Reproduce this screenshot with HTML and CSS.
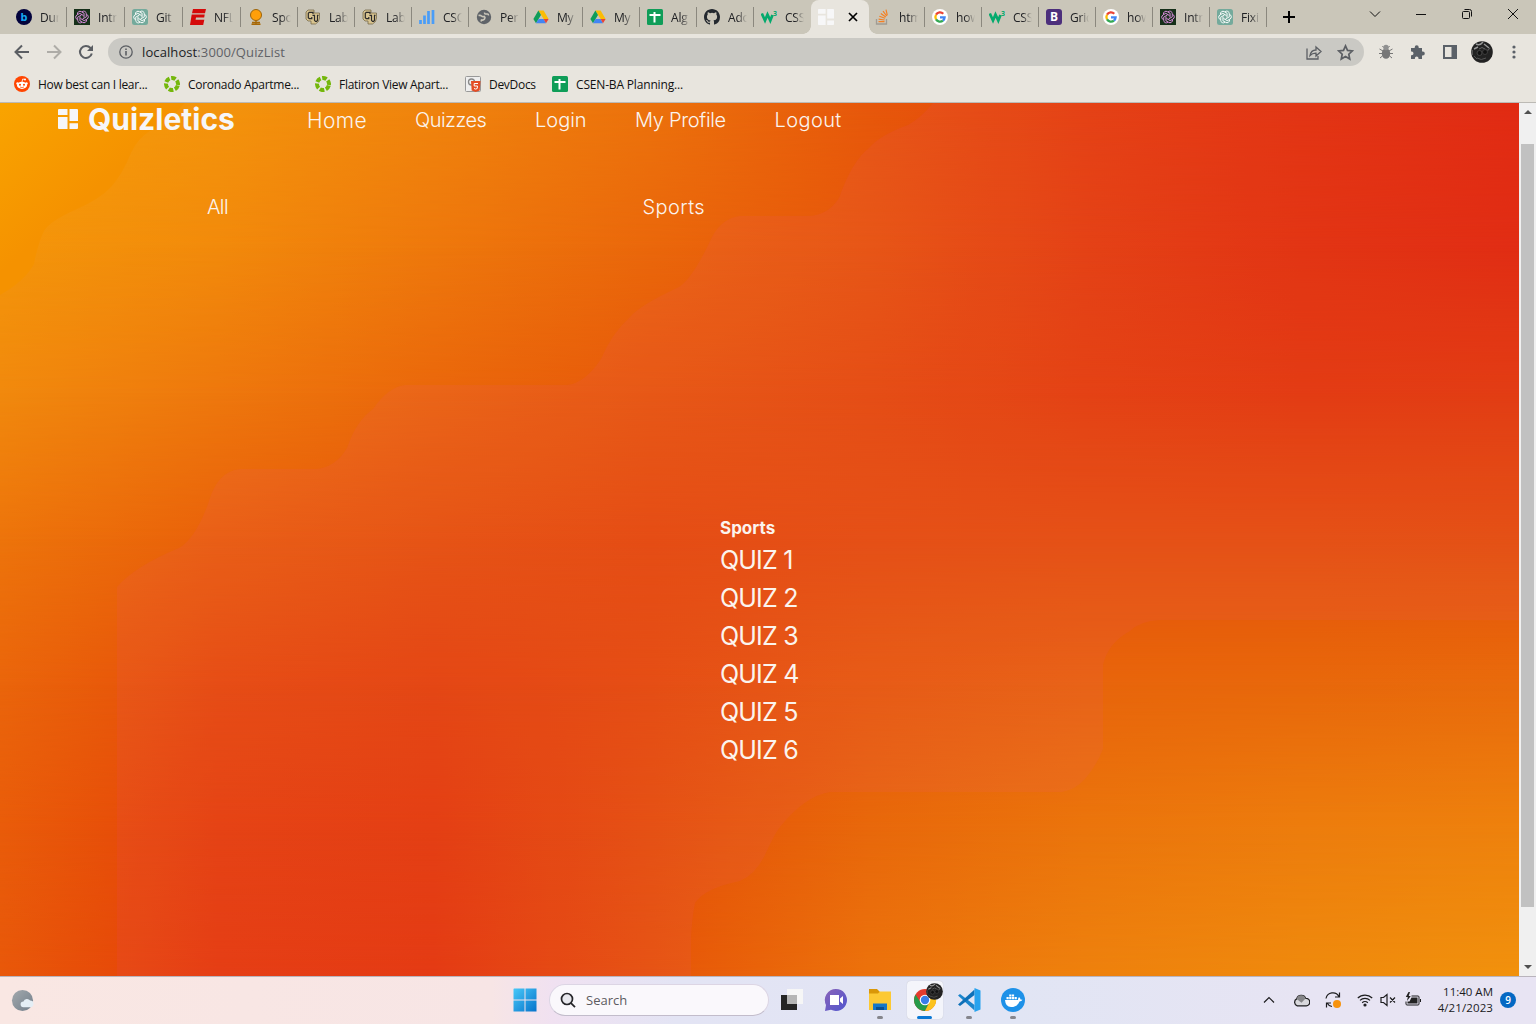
FILE: index.html
```html
<!DOCTYPE html>
<html lang="en">
<head>
<meta charset="utf-8">
<title>Quizletics</title>
<link rel="stylesheet" href="styles.css">
</head>
<body>
<svg class="defs" aria-hidden="true">
  <symbol id="knot" viewBox="0 0 16 16"><g fill="none" stroke="currentColor" stroke-width="1"><path d="M8 2.1a2.9 2.9 0 0 1 4.9 2.3v3.5L8.6 10.3"/><path d="M8 2.1a2.9 2.9 0 0 1 4.9 2.3v3.5L8.6 10.3" transform="rotate(60 8 8)"/><path d="M8 2.1a2.9 2.9 0 0 1 4.9 2.3v3.5L8.6 10.3" transform="rotate(120 8 8)"/><path d="M8 2.1a2.9 2.9 0 0 1 4.9 2.3v3.5L8.6 10.3" transform="rotate(180 8 8)"/><path d="M8 2.1a2.9 2.9 0 0 1 4.9 2.3v3.5L8.6 10.3" transform="rotate(240 8 8)"/><path d="M8 2.1a2.9 2.9 0 0 1 4.9 2.3v3.5L8.6 10.3" transform="rotate(300 8 8)"/></g></symbol>
  <symbol id="gpt-dark" viewBox="0 0 16 16"><path fill="#16301a" d="M0 0h16v16H0z"/><use href="#knot" x="1" y="1" width="14" height="14" color="#e08fe4"/></symbol>
  <symbol id="gpt-green" viewBox="0 0 16 16"><rect width="16" height="16" rx="2.5" fill="#74aa9c"/><use href="#knot" x="1" y="1" width="14" height="14" color="#fff"/></symbol>
  <symbol id="cu" viewBox="0 0 16 16"><path d="M3 1h6v3h5.500v5l-1 3.500-3 2.500H6V12H3L1 10V3z" fill="#d8c490" stroke="#6d6040" stroke-width=".7"/><path d="M8 5V3.300H4.300L3.300 4.300v4.400L4.300 9.700h2.500V8M7.500 6.300h2v5l1 1h1.200l.8-1V6.300h1" fill="none" stroke="#2b2a2a" stroke-width="1.200"/></symbol>
  <symbol id="drive" viewBox="0 0 16 16"><path fill="#fbbc04" d="M5.400 1.500h5.200L15.600 10h-5z"/><path fill="#0f9d58" d="M5.400 1.500 8 5.900 3 14.300.4 10z"/><path fill="#4285f4" d="M5.600 10h5L13 14.300H3z"/><path fill="#ea4335" d="M10.600 10h5L13 14.300z"/></symbol>
  <symbol id="sheet" viewBox="0 0 16 16"><rect width="16" height="16" rx="1.500" fill="#0f9d58"/><path d="M2.500 6h11M7.500 3V13.500" stroke="#fff" stroke-width="2"/></symbol>
  <symbol id="w3" viewBox="0 0 16 16"><path d="M.8 4.500 4 11.500 6.500 5.500 9.300 11.500 11.500 6" fill="none" stroke="#04aa6d" stroke-width="2.700"/><text x="12" y="7" font-size="7" font-weight="700" fill="#04aa6d">3</text></symbol>
  <symbol id="google" viewBox="0 0 16 16"><circle cx="8" cy="8" r="8" fill="#fff"/><g fill="none" stroke-width="2.300"><path stroke="#ea4335" d="M4.020 5.700A4.600 4.600 0 0 1 11.250 4.750"/><path stroke="#fbbc05" d="M4.020 10.300a4.600 4.600 0 0 1 0-4.600"/><path stroke="#34a853" d="M10.960 11.520a4.600 4.600 0 0 1-6.940-1.220"/><path stroke="#4285f4" d="M8 8.300h4.600a4.600 4.600 0 0 1-1.640 3.220"/></g></symbol>
  <symbol id="leaf-ring" viewBox="0 0 16 16"><circle cx="8" cy="8" r="6" fill="none" stroke="#74b70b" stroke-width="4" stroke-dasharray="4.700 1.583" transform="rotate(15 8 8)"/></symbol>
  <symbol id="tiles" viewBox="0 0 20 20"><path fill="currentColor" d="M1 0h8.500v6H0V1q0-1 1-1zM0 8h9.500v12H1q-1 0-1-1zM11.500 0H19q1 0 1 1v11h-8.500zM11.500 14.300H20V19q0 1-1 1h-7.500z"/></symbol>
  <symbol id="face" viewBox="0 0 22 22"><circle cx="11" cy="11" r="10.800" fill="#222"/><path d="M5 3q4 2 7-2M13 3l5 4M3 8l4-2" stroke="#999" fill="none" stroke-width="1.400"/><path d="M8 8q3-3 6 0t5-1" stroke="#666" fill="none"/><circle cx="8.500" cy="12" r="2.500" fill="#111" stroke="#444"/><circle cx="14" cy="11" r="2.500" fill="#111" stroke="#3c3c3c"/><path d="M1.500 9v5M6 17q4 3 9 0M3 15l3 3" stroke="#555" fill="none"/></symbol>
</svg>

<header class="chrome">
  <div class="tabstrip">
    <div class="tabs">
      <div class="tab"><svg class="ico" viewBox="0 0 16 16"><circle cx="8" cy="8" r="8" fill="#02023c"/><text x="4.600" y="12" font-size="11" font-weight="700" fill="#14a8f4">b</text></svg><span>Dur</span></div>
      <div class="tab"><svg class="ico"><use href="#gpt-dark"/></svg><span>Intr</span></div>
      <div class="tab"><svg class="ico"><use href="#gpt-green"/></svg><span>Git</span></div>
      <div class="tab"><svg class="ico" viewBox="0 0 16 16"><path fill="#d50a0a" d="M3 0h13l-1 4.300H2zM1.700 5.600h13l-.5 2.800H6l-.4 2.300h8.700L13.200 16H0z"/></svg><span>NFL</span></div>
      <div class="tab"><svg class="ico" viewBox="0 0 16 16"><circle cx="8" cy="6" r="5.500" fill="#ff9f0a" stroke="#9b640c"/><path d="M4 13.500h8M8 11v4M3.500 15.300h9" stroke="#a76806" stroke-width="1.400"/></svg><span>Spo</span></div>
      <div class="tab"><svg class="ico"><use href="#cu"/></svg><span>Lab</span></div>
      <div class="tab"><svg class="ico"><use href="#cu"/></svg><span>Lab</span></div>
      <div class="tab"><svg class="ico" viewBox="0 0 16 16"><path d="M1.500 11v4M5.500 6.500V15M9.500 2v13M14 1v14" stroke="#4a9df8" stroke-width="2.700"/></svg><span>CSC</span></div>
      <div class="tab"><svg class="ico" viewBox="0 0 16 16"><circle cx="8" cy="8" r="7.200" fill="#5f6368"/><path d="M2.500 6.500q2-.5 3 .5t3 .5q1 1 0 2.500t-3 1l-.5 1.500" fill="none" stroke="#cac6b9" stroke-width="1.600"/><path d="M8.500 3.500q0 2 2 1.500t2 1.500" fill="none" stroke="#cac6b9" stroke-width="1.500"/></svg><span>Per</span></div>
      <div class="tab"><svg class="ico"><use href="#drive"/></svg><span>My</span></div>
      <div class="tab"><svg class="ico"><use href="#drive"/></svg><span>My</span></div>
      <div class="tab"><svg class="ico"><use href="#sheet"/></svg><span>Alg</span></div>
      <div class="tab"><svg class="ico" viewBox="0 0 16 16"><path fill="#24292f" d="M8 0C3.580 0 0 3.580 0 8c0 3.540 2.290 6.530 5.470 7.590.4.070.55-.17.55-.38v-1.490c-2.010.37-2.530-.49-2.690-.94-.09-.23-.48-.94-.82-1.130-.28-.15-.68-.52-.01-.53.63-.01 1.080.58 1.230.82.72 1.210 1.870.87 2.330.66.07-.52.28-.87.51-1.070-1.780-.2-3.640-.89-3.640-3.950 0-.87.31-1.590.82-2.150-.08-.2-.36-1.020.08-2.120 0 0 .67-.21 2.200.82a7.600 7.600 0 0 1 4 0c1.530-1.040 2.200-.82 2.200-.82.44 1.100.16 1.920.08 2.120.51.56.82 1.270.82 2.150 0 3.070-1.870 3.750-3.650 3.950.29.25.54.73.54 1.480v2.200c0 .21.15.46.55.38A8 8 0 0 0 16 8c0-4.420-3.580-8-8-8z"/></svg><span>Ado</span></div>
      <div class="tab no-sep"><svg class="ico"><use href="#w3"/></svg><span>CSS</span></div>
      <div class="tab active"><svg class="ico"><use href="#tiles"/></svg><svg class="close" viewBox="0 0 10 10"><path d="M1 1l8 8M9 1 1 9" stroke="#000" stroke-width="1.700"/></svg></div>
      <div class="tab"><svg class="ico" viewBox="0 0 16 16"><path d="M1.500 10v5h10v-5" fill="none" stroke="#a09c94" stroke-width="1.300"/><path d="M3.500 12.700h6M3.600 10.200l6 .8M4.300 7.300l5.800 1.900M5.800 4.500l5 3.500M8 2.200l3.700 4.800M11 .6l1.300 5.800" stroke="#f48024" stroke-width="1.200"/></svg><span>htm</span></div>
      <div class="tab"><svg class="ico"><use href="#google"/></svg><span>how</span></div>
      <div class="tab"><svg class="ico"><use href="#w3"/></svg><span>CSS</span></div>
      <div class="tab"><svg class="ico" viewBox="0 0 16 16"><rect width="16" height="16" rx="3" fill="#4c2f7c"/><text x="3.900" y="12.300" font-size="12" font-weight="700" fill="#fff">B</text></svg><span>Grid</span></div>
      <div class="tab"><svg class="ico"><use href="#google"/></svg><span>how</span></div>
      <div class="tab"><svg class="ico"><use href="#gpt-dark"/></svg><span>Intr</span></div>
      <div class="tab"><svg class="ico"><use href="#gpt-green"/></svg><span>Fixi</span></div>
    </div>
    <svg class="plus" viewBox="0 0 12 12"><path d="M6 0v12M0 6h12" stroke="#000" stroke-width="2"/></svg>
    <div class="winctl">
      <svg viewBox="0 0 12 12"><path d="M1 3.500l5 5 5-5"/></svg>
      <svg viewBox="0 0 12 12"><path d="M1 6.500h10"/></svg>
      <svg viewBox="0 0 12 12"><rect x="1.500" y="3.500" width="7" height="7" rx="1"/><path d="M3.500 1.500H8.500Q10.500 1.500 10.500 3.500V8.500"/></svg>
      <svg viewBox="0 0 12 12"><path d="M1 1l10 10M11 1 1 11"/></svg>
    </div>
  </div>

  <div class="toolbar">
    <div class="navbtns">
      <svg viewBox="0 0 16 16"><path d="M15 8H2M8 1.500 1.500 8 8 14.500" stroke="#5b5e63"/></svg>
      <svg viewBox="0 0 16 16"><path d="M1 8h13M8 1.500 14.500 8 8 14.500" stroke="#aeaca7"/></svg>
      <svg viewBox="0 0 16 16"><path d="M13.800 9.500A6 6 0 1 1 12.500 4L14 5.500" stroke="#5b5e63"/><path d="M15 1v6H9z" fill="#5b5e63"/></svg>
    </div>
    <div class="omnibox">
      <svg class="info" viewBox="0 0 14 14"><circle cx="7" cy="7" r="6.200"/><path d="M7 6v4.500M7 3.500v1.500" stroke-width="1.600"/></svg>
      <span class="url">localhost<i>:3000/QuizList</i></span>
      <svg class="share" viewBox="0 0 16 16"><path d="M1 4.500v10.500h11V12M4 11.500Q5 6 10 6V3l5 4.500L10 12V9.200Q6.500 9 4 11.500z"/></svg>
      <svg class="star" viewBox="0 0 16 16"><path d="M8 1.800l1.900 4.200 4.600.5-3.400 3.100.9 4.500L8 11.800l-4 2.300.9-4.500L1.500 6.500 6.100 6z"/></svg>
    </div>
    <div class="exts">
      <svg viewBox="0 0 16 16"><path d="M1.500 5l3.500 2M14.500 5 11 7M1 9.500h4M15 9.500h-4M2 14l3-2.500M14 14l-3-2.500M5.500 3.500 4.500 2M10.500 3.500l1-1.500" stroke="#777" stroke-width="1"/><ellipse cx="8" cy="9.500" rx="4.200" ry="5.200" fill="#777"/><circle cx="8" cy="3.500" r="2.700" fill="#909090"/></svg>
      <svg viewBox="0 0 16 16"><path fill="#5b6168" d="M1 4h3.700V3.300a2 2 0 0 1 4 0V4H12v3.500h.8a2 2 0 0 1 0 4H12V15H8.500v-.8a1.800 1.800 0 0 0-3.600 0v.8H1v-3.800h.7a1.800 1.800 0 0 0 0-3.600H1z"/></svg>
      <svg viewBox="0 0 16 16"><path fill="#5b6168" fill-rule="evenodd" d="M1 1h14v14H1zM3 3v10h6.500V3z"/></svg>
      <svg class="avatar"><use href="#face"/></svg>
      <svg viewBox="0 0 16 16"><g fill="#5b6168"><circle cx="8" cy="3" r="1.600"/><circle cx="8" cy="8" r="1.600"/><circle cx="8" cy="13" r="1.600"/></g></svg>
    </div>
  </div>

  <div class="bookmarks">
    <div class="bm b1"><svg class="ico" viewBox="0 0 16 16"><circle cx="8" cy="8" r="8" fill="#ff4500"/><ellipse cx="8" cy="9.300" rx="5" ry="3.600" fill="#fff"/><circle cx="3.500" cy="7.500" r="1.200" fill="#fff"/><circle cx="12.500" cy="7.500" r="1.200" fill="#fff"/><circle cx="11" cy="3.500" r="1" fill="#fff"/><path d="M8 6l.7-3 2.300.5" stroke="#fff" stroke-width=".8" fill="none"/><circle cx="6" cy="8.800" r="1" fill="#ff4500"/><circle cx="10" cy="8.800" r="1" fill="#ff4500"/><path d="M6 11q2 1.200 4 0" stroke="#ff4500" stroke-width=".7" fill="none"/></svg><span>How best can I lear...</span></div>
    <div class="bm b2"><svg class="ico"><use href="#leaf-ring"/></svg><span>Coronado Apartme...</span></div>
    <div class="bm b3"><svg class="ico"><use href="#leaf-ring"/></svg><span>Flatiron View Apart...</span></div>
    <div class="bm b4"><svg class="ico" viewBox="0 0 16 16"><rect x=".5" y=".5" width="15" height="15" rx="1" fill="#eee" stroke="#999"/><circle cx="6.500" cy="6" r="3" fill="none" stroke="#888" stroke-width="1.300"/><path fill="#e44d26" d="M6 5h9.500l-.8 9.500-4 1.500-4-1.500z"/><path d="M13 7.500H9.200V10h3.300l-.3 2.500-1.500.6-1.700-.6" fill="none" stroke="#fff"/></svg><span>DevDocs</span></div>
    <div class="bm b5"><svg class="ico"><use href="#sheet"/></svg><span>CSEN-BA Planning...</span></div>
  </div>
</header>

<main class="viewport">
  <div class="page">
    <div class="backdrop">
      <div class="band r0"></div><div class="band r1"></div><div class="band r2"></div>
      <div class="band r3"></div><div class="band r4"></div><div class="band r5"></div>
      <svg class="facets" viewBox="0 0 1519 873">
        <defs><linearGradient id="corner" gradientUnits="userSpaceOnUse" x1="0" y1="0" x2="85" y2="95"><stop offset="0" stop-color="#f9a400"/><stop offset="1" stop-color="#f59200"/></linearGradient></defs>
        <path fill="url(#corner)" d="M0 0H185Q165 22 150 28Q138 35 131 50Q122 72 111 84Q100 96 75 107Q50 118 44 128Q38 140 34 161Q25 178 0 192Z"/>
        <path fill="#e850ff" fill-opacity=".055" d="M117 873V484Q135 463 179 445Q195 436 208 401Q217 368 240 366H315Q335 365 347 345Q356 318 373 306Q388 284 405 282H567Q585 280 601 256Q612 230 630 214Q640 202 679 184Q693 175 712 134Q722 115 740 113H809Q828 112 839 95Q852 58 869 45Q880 32 908 22Q922 14 933 0H1519V517H1160Q1140 518 1130 528Q1108 540 1103 562V646Q1097 662 1085 676Q1075 687 1062 689H830Q805 693 780 724Q775 730 765 752Q755 772 740 778Q705 785 695 800Q692 815 691 835V873Z"/>
      </svg>
    </div>
    <div class="content">
      <nav class="nav">
        <a class="brand"><svg viewBox="0 0 20 20"><use href="#tiles"/></svg><b>Quizletics</b></a>
        <a class="n1">Home</a><a class="n2">Quizzes</a><a class="n3">Login</a><a class="n4">My Profile</a><a class="n5">Logout</a>
      </nav>
      <div class="cats"><a class="c1">All</a><a class="c2">Sports</a></div>
      <section class="quizzes">
        <h3>Sports</h3>
        <p>QUIZ 1</p><p>QUIZ 2</p><p>QUIZ 3</p><p>QUIZ 4</p><p>QUIZ 5</p><p>QUIZ 6</p>
      </section>
    </div>
  </div>
  <div class="scrollbar">
    <svg viewBox="0 0 8 4"><path d="M0 4 4 0l4 4z" fill="#505050"/></svg>
    <div class="thumb"></div>
    <svg viewBox="0 0 8 4"><path d="M0 0l4 4 4-4z" fill="#505050"/></svg>
  </div>
</main>

<footer class="taskbar">
  <svg class="weather" viewBox="0 0 24 24"><defs><linearGradient id="moon" x2="1" y2="1"><stop stop-color="#a3a9ad"/><stop offset="1" stop-color="#727f8b"/></linearGradient></defs><circle cx="12" cy="12" r="11" fill="url(#moon)"/><path d="M13 19a3 3 0 0 1 0-6 4 4 0 0 1 7-1 3.500 3.500 0 0 1 0 7z" fill="#e4eef5"/></svg>
  <div class="center">
    <div class="slot win"><svg viewBox="0 0 24 24"><defs><linearGradient id="wg" x2="1" y2="1"><stop stop-color="#48c8f8"/><stop offset="1" stop-color="#0673cb"/></linearGradient></defs><path fill="url(#wg)" d="M1 .5h10.500V11.500H.5V1zM12.500.5h11v11h-11zM.5 12.500h11v11H.5zM12.500 12.500h11v11h-11z"/></svg></div>
    <div class="search"><svg viewBox="0 0 16 16"><circle cx="7" cy="7" r="5.500" fill="#e8e8ee"/><path d="M11 11.200l4 4"/></svg><span>Search</span></div>
    <div class="slot"><svg viewBox="0 0 24 24"><path fill="#f6f6f6" d="M7 1h16v15H7z"/><path fill="#252525" d="M1 7h16v15H1z"/><path fill="#b5b5b5" d="M7 7h10v9H7z"/></svg></div>
    <div class="slot"><svg viewBox="0 0 24 24"><defs><linearGradient id="cg" x2="1" y2="1"><stop stop-color="#8a63b8"/><stop offset="1" stop-color="#4f55cf"/></linearGradient></defs><path fill="url(#cg)" d="M12 1a11 11 0 1 1-5 20.800L1 23l1-6A11 11 0 0 1 12 1z"/><path fill="#fff" d="M6 7h9v10H6zM16 10.500l3-2.500v8l-3-2.500z"/></svg></div>
    <div class="slot dot"><svg viewBox="0 0 24 24"><path fill="#d99708" d="M1 1h8l3 3v5H1z"/><path fill="#fcc934" d="M1 5.500h9L12 3.500h11V22H1z"/><path fill="#1577c8" d="M5 15.500h14V22H5z"/><path fill="#0a4f91" d="M8 19h8v3H8z"/></svg></div>
    <div class="slot live"><svg viewBox="0 0 24 24"><circle cx="12" cy="12" r="11" fill="#e33b2e"/><path fill="#269b49" d="M2.500 6.500A11 11 0 0 0 12 23l4.300-8.500L12 12l-4.300 2.500z"/><path fill="#fcc31e" d="M22.200 7.500H12l4.300 7L12 23A11 11 0 0 0 22.200 7.500z"/><circle cx="12" cy="12" r="5.300" fill="#fff"/><circle cx="12" cy="12" r="4.200" fill="#3a7de8"/></svg><svg class="badge-face" viewBox="0 0 22 22"><use href="#face" width="22" height="22"/></svg></div>
    <div class="slot dot"><svg viewBox="0 0 24 24"><path fill="#1b85cc" d="M1 7.500 3 6l14.500 11v5.500z"/><path fill="#0e70b8" d="M1 16.500 3 18 17.500 7V1.500z"/><path fill="#27a2ee" d="M17.500 0 23.500 2.500v19l-6 2.500z"/></svg></div>
    <div class="slot dot"><svg viewBox="0 0 24 24"><circle cx="12" cy="12" r="12" fill="#1d91e8"/><path fill="#fff" d="M4 12h13q0-2 1-3 1.500 1 1.500 2.500 1 0 2 .3-1 1.700-3 1.700Q16.500 19 10 19q-5.500 0-6-7zM5.500 9h2.200v2.200H5.500zM8.200 9h2.200v2.200H8.200zM10.900 9h2.200v2.200h-2.200zM13.600 9h2.200v2.200h-2.200zM8.200 6.500h2.200v2H8.200zM10.900 6.500h2.200v2h-2.200z"/></svg></div>
  </div>
  <div class="tray">
    <svg class="up" viewBox="0 0 16 16"><path d="M3 10.500l5-5 5 5"/></svg>
    <svg class="cloud" viewBox="0 0 16 16"><path fill="#d8d8dc" d="M4 13a3.500 3.500 0 0 1-.5-6.500A4.500 4.500 0 0 1 12 6a3.500 3.500 0 0 1 .5 7z"/><path d="M3.500 6.700A4.300 4.300 0 0 1 11.800 6L8 10z" fill="#858588" stroke="none"/></svg>
    <svg class="sync" viewBox="0 0 16 16"><path d="M1 6.500A7 7 0 0 1 14 4.500M14.500.5v4.500H10M7 14.500A7 7 0 0 1 2 11M1.500 15.500V11H6"/><circle cx="12" cy="12" r="4" fill="#f7930d" stroke="none"/></svg>
    <svg class="wifi" viewBox="0 0 16 16"><path d="M.8 6a10.300 10.300 0 0 1 14.400 0M3 8.400a7 7 0 0 1 10 0M5.200 10.800a4 4 0 0 1 5.600 0"/><circle cx="8" cy="13" r="1" fill="#222"/></svg>
    <svg class="mute" viewBox="0 0 16 16"><path d="M1 5.500h2.500L7 2.500v11L3.500 10.500H1zM10 5.500l5 5M15 5.500l-5 5"/></svg>
    <svg class="batt" viewBox="0 0 16 16"><path fill="#222" stroke="none" d="M6.500 5.500h6v6H2.500V9.500h2z"/><path stroke-width="1" d="M6.500 4H13q1 0 1 1v7q0 1-1 1H2q-1 0-1-1V9.500M15.500 7v3"/><path fill="#222" stroke="none" d="M3.500 0 .8 5h2L2 9l3.800-5H3.700L5 0z"/></svg>
    <div class="clock"><span class="t">11:40 AM</span><span class="d">4/21/2023</span></div>
    <span class="count">9</span>
  </div>
</footer>
</body>
</html>
```
FILE: styles.css
```css
* { box-sizing: border-box; }
body { margin: 0; width: 1536px; height: 1024px; overflow: hidden; display: flex; flex-direction: column; font-family: "Open Sans", "Noto Sans", sans-serif; font-size: 12px; color: #202124; }
svg { display: block; flex: none; }
.defs { position: absolute; width: 0; height: 0; }
.ico { width: 16px; height: 16px; flex: none; }

.chrome { height: 103px; flex: none; background: #e8e5de; border-bottom: 1px solid #bcbab5; }
.tabstrip { height: 34px; background: #cac6b9; display: flex; align-items: center; }
.tabs { display: flex; width: 1258px; margin-left: 9px; height: 34px; }
.tab { flex: none; width: 57px; display: flex; align-items: center; padding-left: 7px; gap: 8px; position: relative; }
.tab:nth-child(-n+4) { width: 58px; }
.tab span { width: 19px; overflow: hidden; white-space: nowrap; font-size: 12px; letter-spacing: -.2px; -webkit-mask-image: linear-gradient(90deg, #000 50%, transparent); mask-image: linear-gradient(90deg, #000 50%, transparent); }
.tab:not(.active):not(.no-sep)::after { content: ""; position: absolute; right: 0; top: 7px; width: 1px; height: 20px; background: #8b887e; }
.tab.active { width: 58px; margin: 0 -1px 0 0; padding-left: 7px; gap: 14px; background: #e8e5de; border-radius: 8px 8px 0 0; color: #f7f7f8; }
.active::before, .active::after { content: ""; position: absolute; bottom: 0; width: 8px; height: 8px; }
.active::before { left: -8px; background: radial-gradient(circle at 0 0, transparent 7.5px, #e8e5de 8px); }
.active::after { right: -8px; background: radial-gradient(circle at 100% 0, transparent 7.5px, #e8e5de 8px); }
.close { width: 10px; height: 10px; }
.plus { width: 12px; height: 12px; margin-left: 16px; }
.winctl { display: flex; margin-left: auto; gap: 34px; padding-right: 17px; padding-bottom: 6px; }
.winctl svg { width: 12px; height: 12px; fill: none; stroke: #111; stroke-width: 1; }

.toolbar { display: flex; align-items: center; height: 36px; }
.navbtns { display: flex; gap: 16px; padding-left: 14px; width: 108px; }
.navbtns svg { width: 16px; height: 16px; fill: none; stroke-width: 2; }
.omnibox { width: 1256px; height: 28px; border-radius: 14px; background: #cac9c4; display: flex; align-items: center; padding: 0 10px 0 11px; }
.omnibox svg { fill: none; stroke: #5b5e63; stroke-width: 1.3; }
.info { width: 14px; height: 14px; }
.url { margin-left: 9px; font-size: 13px; letter-spacing: .1px; }
.url i { font-style: normal; color: #5f6166; }
.share { width: 16px; height: 16px; margin-left: auto; }
.star { width: 17px; height: 17px; margin-left: 15px; }
.star path { stroke-width: 1.6; }
.exts { display: flex; align-items: center; gap: 16px; padding-left: 14px; }
.exts svg { width: 16px; height: 16px; }
.exts .avatar { width: 22px; height: 22px; margin: 0 -3px; }

.bookmarks { display: flex; padding-left: 14px; height: 28px; align-items: center; }
.bm { display: flex; align-items: center; gap: 8px; white-space: nowrap; color: #111; }
.b1 { width: 150px; } .b2 { width: 151px; } .b3 { width: 150px; } .b4 { width: 87px; }
.bm span { letter-spacing: -.29px; }
.b5 span { letter-spacing: -.17px; }

.viewport { height: 873px; display: flex; flex: none; }
.page { width: 1519px; display: grid; overflow: hidden; font-family: "Inter", "Open Sans", sans-serif; color: #fbf4ee; }
.page > * { grid-area: 1 / 1; min-width: 0; }
.backdrop { display: grid; grid-template-rows: 145px 145px 146px 146px 145px 146px; position: relative; }
.facets { position: absolute; left: 0; top: 0; width: 1519px; height: 873px; }
.band { background: var(--from); position: relative; }
.band::after { content: ""; position: absolute; inset: 0; background: var(--to); -webkit-mask-image: linear-gradient(transparent, #000); mask-image: linear-gradient(transparent, #000); }
.page {
  --g0: linear-gradient(90deg, #f7a008, #f4940c, #f0840d, #ec720c, #e7580b, #e54209, #e33407, #e12a06);
  --g1: linear-gradient(90deg, #f4960a, #f28a0b, #ee780c, #ea670b, #e7570a, #e44209, #e23407, #e12c07);
  --g2: linear-gradient(90deg, #f1890d, #ee780d, #ea670b, #e7590a, #e54f09, #e44208, #e33c07, #e23d07);
  --g3: linear-gradient(90deg, #ed740b, #e9610a, #e65509, #e54e08, #e5510a, #e5520a, #e5520a, #e45209);
  --g4: linear-gradient(90deg, #ea650b, #e64e09, #e44708, #e54f08, #e75d0a, #e8650b, #e8680b, #e96b0c);
  --g5: linear-gradient(90deg, #e95c0a, #e54308, #e43f07, #e55208, #e8680b, #eb750c, #ed7d0d, #ee820d);
  --g6: linear-gradient(90deg, #e8580a, #e53e08, #e43b07, #e65508, #ec720c, #ee810d, #ef8a0d, #f1910d);
}
.r0 { --from: var(--g0); --to: var(--g1); }
.r1 { --from: var(--g1); --to: var(--g2); }
.r2 { --from: var(--g2); --to: var(--g3); }
.r3 { --from: var(--g3); --to: var(--g4); }
.r4 { --from: var(--g4); --to: var(--g5); }
.r5 { --from: var(--g5); --to: var(--g6); }
.content { position: relative; }
.nav { display: flex; align-items: center; height: 34px; padding-left: 58px; font-size: 20px; font-weight: 300; white-space: nowrap; }
.brand { display: flex; align-items: center; gap: 10px; width: 249px; color: #f6f6f8; }
.brand svg { width: 20px; height: 20px; margin-top: -2px; }
.brand b { font-size: 30px; line-height: 32px; font-weight: 700; letter-spacing: 0; margin-top: -3px; }
.n1 { width: 108px; font-size: 21px; letter-spacing: .4px; } .n2 { width: 120px; letter-spacing: -.5px; } .n3 { width: 100px; } .n4 { width: 139.500px; letter-spacing: -.3px; } .n5 { letter-spacing: .4px; }
.cats { display: grid; grid-template-columns: 435.500px 1fr; padding: 58px 0 0 207px; font-size: 20px; line-height: 24px; font-weight: 300; }
.c1 { letter-spacing: -.6px; } .c2 { letter-spacing: .4px; }
.quizzes { padding: 297px 0 0 720px; }
.quizzes h3 { margin: 0 0 1px; font-size: 17px; line-height: 24px; font-weight: 700; }
.quizzes p { margin: 0; font-size: 25px; line-height: 38px; font-weight: 400; letter-spacing: -.8px; white-space: nowrap; }

.scrollbar { width: 17px; background: #f0f0f0; display: flex; flex-direction: column; align-items: center; padding: 7px 0 7px; }
.scrollbar svg { width: 8px; height: 4px; }
.thumb { width: 13px; height: 763px; margin: 30px 0 auto; background: #c1c1c1; }

.taskbar { height: 48px; border-top: 1px solid #b9b4bc; display: flex; align-items: flex-start; background: linear-gradient(90deg, #f9e7e3 0, #f7e5e5 32%, #f0e1f1 36%, #e3e4f4 44%, #e1e5f4 66%, #e7e4f3 85%, #e8e4f3 100%); }
.weather { width: 23px; height: 23px; margin: 12px 0 0 11px; }
.center { display: flex; align-items: center; margin-left: 468px; height: 46px; }
.slot { width: 44.200px; height: 40px; display: flex; align-items: center; justify-content: center; position: relative; }
.slot svg { width: 24px; height: 24px; }
.win { width: 45px; }
.slot.dot::after, .slot.live::after { content: ""; position: absolute; bottom: 1px; width: 6px; height: 3px; border-radius: 2px; background: #85858c; }
.slot.live::before { content: ""; position: absolute; inset: 1px 4px; border-radius: 4px; background: #f4f5fb; box-shadow: 0 0 1px #bbb; }
.slot.live svg { position: relative; }
.slot.live::after { width: 15px; background: #0a78d4; }
.slot.live .badge-face { position: absolute; right: 4px; top: 3px; width: 17px; height: 17px; }
.search { width: 220px; height: 32px; border-radius: 16px; background: #faf8fc; border: 1px solid #dcd5e4; border-bottom-color: #c2bccb; display: flex; align-items: center; gap: 10px; padding-left: 10px; margin: 0 1px 0 2px; font-size: 13px; color: #5c5b60; }
.search svg { width: 16px; height: 16px; fill: none; stroke: #26262a; stroke-width: 1.7; }
.tray { display: flex; align-items: center; margin-left: auto; padding-right: 20px; height: 46px; }
.tray svg { width: 16px; height: 16px; fill: none; stroke: #1d1d1f; stroke-width: 1.2; }
.tray .cloud { width: 17px; height: 17px; margin-left: 16px; } .sync { margin-left: 15px; } .wifi { margin-left: 16px; } .mute { margin-left: 7px; } .batt { margin-left: 9px; }
.clock { width: 72px; display: flex; flex-direction: column; align-items: flex-end; font-size: 11.500px; line-height: 16px; white-space: nowrap; color: #1b1b1d; }
.d { letter-spacing: .1px; }
.count { width: 16px; height: 16px; margin-left: 7px; border-radius: 50%; background: #0468c3; color: #fff; font-size: 10px; font-weight: 600; line-height: 16px; text-align: center; }
```
